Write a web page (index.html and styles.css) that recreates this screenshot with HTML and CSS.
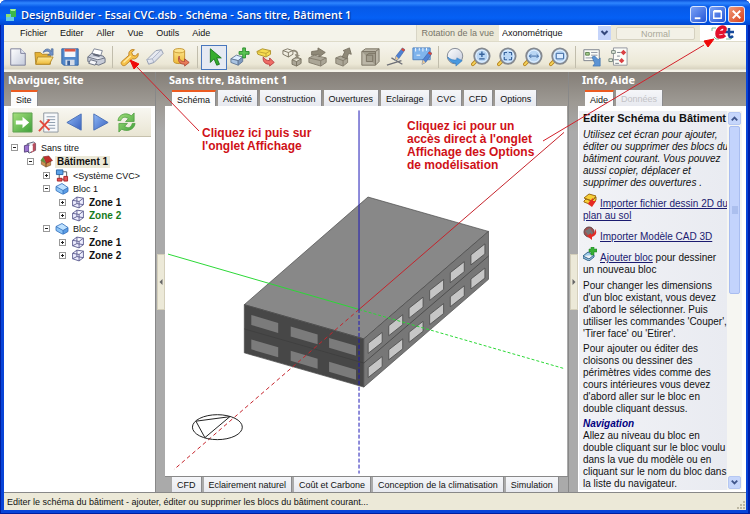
FILE: index.html
```html
<!DOCTYPE html>
<html lang="fr">
<head>
<meta charset="utf-8">
<title>DesignBuilder</title>
<link rel="stylesheet" href="styles.css">
</head>
<body>
<svg class="defs" aria-hidden="true">
  <defs>
    <linearGradient id="steel" x1="0" y1="0" x2="1" y2="1"><stop offset="0" stop-color="#ffffff"/><stop offset="1" stop-color="#c4cadb"/></linearGradient>
    <linearGradient id="gold" x1="0" y1="0" x2="0" y2="1"><stop offset="0" stop-color="#ffeb9a"/><stop offset="1" stop-color="#edb936"/></linearGradient>
    <linearGradient id="sky" x1="0" y1="0" x2="1" y2="1"><stop offset="0" stop-color="#8eb8f5"/><stop offset="1" stop-color="#3a62c0"/></linearGradient>
    <linearGradient id="leaf" x1="0" y1="0" x2="1" y2="1"><stop offset="0" stop-color="#a5e07c"/><stop offset="1" stop-color="#3ea03a"/></linearGradient>
    <symbol id="lens" viewBox="0 0 22 22"><path d="M6 15l-4 4" stroke="#b9851e" stroke-width="4" stroke-linecap="round"/><path d="M6 15l-4 4" stroke="#f4d35a" stroke-width="2" stroke-linecap="round"/><circle cx="12" cy="10" r="8.5" fill="#b9d6f4" stroke="#85898f" stroke-width="2"/><circle cx="12" cy="10" r="6.5" fill="none" stroke="#e9f4ff"/></symbol>
    <symbol id="pencil" viewBox="0 0 12 14"><path d="M9 0l3 2-7 10-4 2 1-5z" fill="#4f82d4" stroke="#385a99" stroke-width=".6"/><path d="M9 0l3 2-1.500 2-3-2z" fill="#d34a3c"/><path d="M2 9l3 3-4 2z" fill="#eccb96"/></symbol>
    <symbol id="block" viewBox="0 0 14 12"><path d="M1 4l6-3 6 4-5 3z" fill="#bfe2ff"/><path d="M1 4l7 4v4L1 8z" fill="#8cc4f6"/><path d="M8 8l5-3v4l-5 3z" fill="#5a9ce4"/><path d="M1 4l6-3 6 4v4l-5 3-7-4zM1 4l7 4 5-3M8 8v4" fill="none" stroke="#2f6cba" stroke-width=".8"/></symbol>
    <symbol id="zone" viewBox="0 0 12 12"><path d="M1 4l4-3 6 1v6l-4 3-6-2zM1 4l6 1 4-3M7 5v6M5 1v6l-4 2M5 7l6 1" fill="#eef" stroke="#55558a" stroke-width=".8"/></symbol>
  </defs>
</svg>

<div class="window">
  <header class="titlebar">
    <svg class="app-icon" viewBox="0 0 12 12"><path d="M5 0h6v8H5z" fill="#3bb84a"/><path d="M5 0h6l-1 2H6z" fill="#a5f09a"/><path d="M1 5h5v3h3v4H1z" fill="#62c8e8"/><path d="M1 5h4v3H1z" fill="#8fe070"/></svg>
    <h1>DesignBuilder - Essai CVC.dsb - Schéma - Sans titre, Bâtiment 1</h1>
    <div class="window-buttons">
      <button aria-label="Réduire"><svg viewBox="0 0 16 16"><path d="M4 11h6v2H4z" fill="#fff"/></svg></button>
      <button aria-label="Agrandir"><svg viewBox="0 0 16 16"><path d="M4 5h8v7H4zM4 4h8" fill="none" stroke="#fff" stroke-width="1.500"/></svg></button>
      <button class="close" aria-label="Fermer"><svg viewBox="0 0 16 16"><path d="M4 4l8 8M12 4l-8 8" stroke="#fff" stroke-width="2"/></svg></button>
    </div>
  </header>

  <div class="menubar">
    <nav class="menu">
      <a href="#">Fichier</a><a href="#">Editer</a><a href="#">Aller</a><a href="#">Vue</a><a href="#">Outils</a><a href="#">Aide</a>
    </nav>
    <div class="view-controls">
      <label for="rotation">Rotation de la vue</label>
      <div class="combo">
        <select id="rotation"><option>Axonométrique</option></select>
        <svg viewBox="0 0 12 14" aria-hidden="true"><path d="M3 5l3 3 3-3" fill="none" stroke="#34487c" stroke-width="2"/></svg>
      </div>
      <button class="normal" disabled>Normal</button>
      <div class="brand"><svg viewBox="0 0 24 16"><path d="M5 3H1v3M3 12l2 2h3M15 14h5l2-2" fill="none" stroke="#7cc49a"/><path d="M18 3v8M14 7h9M18 11c1 2 3 1 4 0" stroke="#174a9c" stroke-width="2.500" fill="none"/><path d="M7 8l6-1c3-5-1-6-4-4-4 3-4 9 0 9 2 0 4-1 5-2" fill="none" stroke="#e2102c" stroke-width="3.500"/></svg></div>
    </div>
  </div>

  <div class="toolbar" role="toolbar">
    <button aria-label="Nouveau"><svg viewBox="0 0 22 22"><path d="M3 2h11l5 5v13H3z" fill="url(#steel)" stroke="#777a96"/><path d="M14 2v5h5" fill="#e4e8f2" stroke="#777a96"/></svg></button>
    <button aria-label="Ouvrir"><svg viewBox="0 0 22 22"><path d="M1 6h6l2 2h9v11H2z" fill="#e5b234" stroke="#ad852a"/><path d="M4 11h17l-4 8H2z" fill="url(#gold)" stroke="#b48b2c"/><path d="M10 6c2-5 7-5 9-1V2h2v7h-6l3-2c-2-3-4-3-8-1z" fill="#6f91c9" stroke="#476594" stroke-width=".7"/></svg></button>
    <button aria-label="Enregistrer"><svg viewBox="0 0 22 22"><path d="M2 2h18v18H4l-2-2z" fill="#5288cb" stroke="#32609f"/><path d="M5 2h12v9H5z" fill="#f4f7fc"/><path d="M5 2h12v3H5z" fill="#dc5542"/><path d="M6 14h10v6H6z" fill="#d5dce8"/><path d="M8 15h3v5H8z" fill="#39619b"/></svg></button>
    <button aria-label="Imprimer"><svg viewBox="0 0 22 22"><path d="M6 8l3-6 9 2-2 6z" fill="#fff" stroke="#777f91"/><path d="M2 11l4-4 13 3 2 3v4l-7 3L2 16z" fill="#c7ccd8" stroke="#646b7c"/><path d="M2 11l11 3 8-2M5 14l7 2-2 4-7-2z" fill="#f6f7fb" stroke="#646b7c"/><path d="M8 8l7 2" stroke="#626878" stroke-width="2"/></svg></button>
    <span class="sep"></span>
    <button aria-label="Options de modélisation"><svg viewBox="0 0 22 22"><path d="M3 16l8-7c-1-4 2-7 6-6l-3 3 1 3 3 1 3-3c1 4-3 7-6 6l-8 7c-3 2-6-2-4-4z" fill="#f6c24a" stroke="#bb7e20"/><path d="M5 17l8-7" stroke="#ffe9a0" stroke-width="1.500"/></svg></button>
    <button aria-label="Effacer"><svg viewBox="0 0 22 22"><path d="M2 14L12 4l6-1 2 4-10 10-6 2z" fill="url(#steel)" stroke="#8d97ac"/><path d="M2 14l6-1L18 3M8 13l2 4" fill="none" stroke="#a7b0c4"/></svg></button>
    <button aria-label="Bibliothèque"><svg viewBox="0 0 22 22"><path d="M3 4c0-3 12-3 12 0v12c0 3-12 3-12 0z" fill="url(#gold)" stroke="#c08d27"/><path d="M3 5c2 2 10 2 12 0" fill="none" stroke="#c99a35"/><path d="M9 10c0 5 3 6 6 6v-3l5 4-5 4v-2c-6 0-8-4-6-9z" fill="#e87b58" stroke="#ae4937"/></svg></button>
    <span class="sep"></span>
    <button class="selected" aria-label="Sélectionner"><svg viewBox="0 0 22 22"><path d="M7 2v15l4-4 3 7 3-1-3-7h5z" fill="#35ad2e" stroke="#19751e"/></svg></button>
    <button aria-label="Ajouter bloc"><svg viewBox="0 0 22 22"><path d="M1 13l6-4 7 2-5 4z" fill="#dcecff" stroke="#617795"/><path d="M1 13l8 2v5l-8-3z" fill="#aac4e2" stroke="#617795"/><path d="M9 15l5-4v5l-5 4z" fill="#7f9bc0" stroke="#617795"/><path d="M14 1h3v4h4v3h-4v4h-3V8h-4V5h4z" fill="#5bc452" stroke="#288b2c"/></svg></button>
    <button aria-label="Etirer"><svg viewBox="0 0 22 22"><path d="M1 5l6-3 9 2v4l-5 3L2 8z" fill="#f6dc4f" stroke="#ac912a"/><path d="M1 5l10 2 5-3M11 7v4" fill="none" stroke="#bfa034"/><path d="M8 11c-1 6 3 8 7 8v2l5-4-5-5v3c-3 0-5-1-7-4z" fill="#ef6c65" stroke="#b73e40"/></svg></button>
    <button aria-label="Copier"><svg viewBox="0 0 22 22"><path d="M1 4l5-2 6 2v4l-5 3-6-3zM1 4l6 2 5-2M7 6v5" fill="none" stroke="#77715f"/><path d="M11 14l5-3 5 2v5l-5 3-5-2zM11 14l5 2 5-3M16 16v5" fill="#aba697" stroke="#77715f"/><path d="M12 3c5 0 6 3 6 6h2l-4 3-2-4h2c0-2-1-3-4-3z" fill="#918b7a"/></svg></button>
    <button aria-label="Déplacer"><svg viewBox="0 0 22 22"><path d="M1 12l6-3 13 3v5l-6 4-13-4z" fill="#aba697" stroke="#817b6b"/><path d="M1 12l13 3 6-3M14 15v6" fill="none" stroke="#817b6b"/><path d="M4 5l7-1V1l8 5-7 5V8L4 9z" fill="#8f8978" stroke="#777161"/></svg></button>
    <button aria-label="Tirer face"><svg viewBox="0 0 22 22"><path d="M2 12l5-2 8 2v5l-5 4-8-3z" fill="#aba697" stroke="#817b6b"/><path d="M2 12l8 3 5-3M10 15v6" fill="none" stroke="#817b6b"/><path d="M9 11l3-6-2-1 7-3 2 7-3-1-2 6z" fill="#8f8978" stroke="#777161"/></svg></button>
    <button aria-label="Couper"><svg viewBox="0 0 22 22"><path d="M2 5l4-3h15v14l-4 4H2z" fill="#bcb7a8" stroke="#777161"/><path d="M2 5h15v15M17 5l4-3M7 9h7v7H7zM7 9l3-2h7" fill="#a29d8d" stroke="#777161"/></svg></button>
    <button aria-label="Dessiner"><svg viewBox="0 0 22 22"><path d="M1 20l16-5M6 12l12 7" stroke="#6e7077" stroke-width="1.500"/><use href="#pencil" x="9" y="0" width="12" height="16"/></svg></button>
    <button aria-label="Mesurer"><svg viewBox="0 0 22 22"><path d="M1 1h19v13H1z" fill="#7fb4ec" stroke="#4d7fbd"/><path d="M4 1v4M8 1v3M12 1v4M16 1v3M5 9h4" stroke="#fff"/><use href="#pencil" x="10" y="4" width="12" height="16"/></svg></button>
    <span class="sep"></span>
    <button aria-label="Orbite"><svg viewBox="0 0 22 22"><circle cx="11" cy="10" r="8.500" fill="url(#steel)" stroke="#7d838f"/><path d="M3 11c3 3 7 4 10 3v-2l6 3-7 6v-3c-4 0-8-3-9-7z" fill="#4a99df" stroke="#2972b8" stroke-width=".6"/></svg></button>
    <button aria-label="Zoom"><svg viewBox="0 0 22 22"><use href="#lens"/><path d="M9 8h6M12 5v6M9 13h6" stroke="#36629c" stroke-width="1.500"/></svg></button>
    <button aria-label="Ajuster"><svg viewBox="0 0 22 22"><use href="#lens"/><path d="M8 9V6h3M16 9V6h-3M8 11v3h3M16 11v3h-3" fill="none" stroke="#36629c" stroke-width="1.200"/></svg></button>
    <button aria-label="Panoramique"><svg viewBox="0 0 22 22"><use href="#lens"/><path d="M7 10h10M9 8l-2 2 2 2M15 8l2 2-2 2" fill="none" stroke="#36629c"/></svg></button>
    <button aria-label="Zoom fenêtre"><svg viewBox="0 0 22 22"><use href="#lens"/><path d="M8 7h8v6H8z" fill="#dcecff" stroke="#36629c"/></svg></button>
    <span class="sep"></span>
    <button aria-label="Charger données"><svg viewBox="0 0 22 22"><path d="M2 3h17v12H2z" fill="#fbfcf7" stroke="#777d88"/><path d="M4 6h4v3H4z" fill="#a5cf8d" stroke="#587d4b"/><path d="M10 6h7M10 9h7M4 12h10" stroke="#8a90a0"/><path d="M11 11l3-1 4 4 2-2v9h-8l2-3z" fill="#5b93d4" stroke="#396da9" stroke-width=".7"/></svg></button>
    <button aria-label="Liste de données"><svg viewBox="0 0 22 22"><path d="M6 1h15v19H6z" fill="#fbfcf7" stroke="#8d919b"/><path d="M4 4h4v3H4zM1 13h4v3H1z" fill="#eaf3e4" stroke="#6e7f75"/><path d="M10 6h4M7 14h5M10 10h3M8 18h4" stroke="#707984"/><path d="M17 3l3 3-3 3-3-3zM15 12l3 3-3 3-3-3z" fill="#da4144"/></svg></button>
  </div>

  <main class="workspace">
    <section class="panel navigator">
      <h2>Naviguer, Site</h2>
      <div class="tabs"><button class="tab active">Site</button></div>
      <div class="sheet">
        <div class="nav-tools">
          <button aria-label="Aller"><svg viewBox="0 0 22 22"><path d="M1 1h20v20H1z" fill="url(#leaf)" stroke="#62a354"/><path d="M4 9h7V5l7 6-7 6v-4H4z" fill="#fff"/></svg></button>
          <button aria-label="Supprimer"><svg viewBox="0 0 22 22"><path d="M6 1h15v20H6z" fill="#f7f9fb" stroke="#8e96a0"/><path d="M9 5h9M9 8h9M9 11h9M11 14h7M11 17h7" stroke="#8c9bac"/><path d="M2 9l10 10M12 8L1 20" stroke="#e2493c" stroke-width="2"/></svg></button>
          <button aria-label="Précédent"><svg viewBox="0 0 22 22"><path d="M18 2v17L3 11z" fill="url(#sky)" stroke="#4b70b7"/></svg></button>
          <button aria-label="Suivant"><svg viewBox="0 0 22 22"><path d="M4 2v17l15-8z" fill="url(#sky)" stroke="#4b70b7"/></svg></button>
          <button aria-label="Actualiser"><svg viewBox="0 0 22 22"><path d="M2 9c1-7 9-9 14-5l3-3v9h-9l3-3c-4-3-7-1-8 2zM20 12c-1 7-9 9-14 6l-3 3v-9h9l-3 3c4 3 7 1 8-3z" fill="url(#leaf)" stroke="#4d9d3f" stroke-width=".8"/></svg></button>
        </div>
        <ul class="tree">
          <li><div class="node"><i class="box minus"></i><svg viewBox="0 0 14 14"><path d="M4 3l7-2 2 2v7l-7 3-2-2z" fill="#edf1f7" stroke="#555b70"/><path d="M1 5l5-1v7l-5 1z" fill="#9b73cf" stroke="#59437e"/><path d="M10 3l3-1v8l-5 3z" fill="#b94d5c"/><path d="M6 5h4v6H6z" fill="#fff"/></svg><span>Sans titre</span></div>
            <ul>
              <li><div class="node current"><i class="box minus"></i><svg viewBox="0 0 14 14"><path d="M2 6l5 3v4l-5-3zM7 9l5-3v5l-5 2z" fill="#c99052" stroke="#704922" stroke-width=".6"/><path d="M4 2l6-1 4 5-7 3z" fill="#c22f2c" stroke="#74201c" stroke-width=".6"/><path d="M4 2L1 6l6 3z" fill="#61923d"/></svg><span>Bâtiment 1</span></div>
                <ul>
                  <li><div class="node"><i class="box"></i><svg viewBox="0 0 14 14"><path d="M4 5v6h6M7 3h5v6" fill="none" stroke="#555"/><path d="M1 1h7v5H1z" fill="#5ca2e8" stroke="#2863a5"/><path d="M2 10h5v3H2zM9 8h4v5H9z" fill="#e65355" stroke="#a52327"/></svg><span>&lt;Système CVC&gt;</span></div></li>
                  <li><div class="node"><i class="box minus"></i><svg viewBox="0 0 14 12"><use href="#block"/></svg><span>Bloc 1</span></div>
                    <ul>
                      <li><div class="node strong"><i class="box"></i><svg viewBox="0 0 12 12"><use href="#zone"/></svg><span>Zone 1</span></div></li>
                      <li><div class="node strong green"><i class="box"></i><svg viewBox="0 0 12 12"><use href="#zone"/></svg><span>Zone 2</span></div></li>
                    </ul></li>
                  <li><div class="node"><i class="box minus"></i><svg viewBox="0 0 14 12"><use href="#block"/></svg><span>Bloc 2</span></div>
                    <ul>
                      <li><div class="node strong"><i class="box"></i><svg viewBox="0 0 12 12"><use href="#zone"/></svg><span>Zone 1</span></div></li>
                      <li><div class="node strong"><i class="box"></i><svg viewBox="0 0 12 12"><use href="#zone"/></svg><span>Zone 2</span></div></li>
                    </ul></li>
                </ul></li>
            </ul></li>
        </ul>
      </div>
    </section>

    <div class="splitter"><button aria-label="Replier le navigateur"><svg viewBox="0 0 8 56"><path d="M6 24v8l-4-4z" fill="#666"/></svg></button></div>

    <section class="panel model">
      <h2>Sans titre, Bâtiment 1</h2>
      <div class="tabs">
        <button class="tab active">Schéma</button><button class="tab">Activité</button><button class="tab">Construction</button><button class="tab">Ouvertures</button><button class="tab">Eclairage</button><button class="tab">CVC</button><button class="tab">CFD</button><button class="tab">Options</button>
      </div>
      <div class="sheet viewport">
        <svg viewBox="165 106 403 370" role="img" aria-label="Bâtiment 1">
          <defs>
            <path id="pane-front" d="M0 0l27 8v10L0 10z"/>
            <path id="pane-side" d="M0 0l14-11v10L0 10z"/>
          </defs>
          <g stroke="#4a4a4a" stroke-width=".7" stroke-linejoin="round">
            <path d="M244.500 304.700L368.500 196.800 489.300 231.300 364.300 339z" fill="#888"/>
            <path d="M244.500 304.700L364.300 339v48.300L244.500 353z" fill="#474747"/>
            <path d="M364.300 339L489.300 231.300v48L364.300 387.300z" fill="#777"/>
            <path d="M244.500 329l119.800 34.200L489.300 256" fill="none" stroke="#3c3c3c"/>
          </g>
          <g fill="#7b7b7b">
            <use href="#pane-front" x="251.500" y="315"/><use href="#pane-front" x="291" y="326.500"/><use href="#pane-front" x="329.500" y="338"/>
            <use href="#pane-front" x="251.500" y="339.500"/><use href="#pane-front" x="291" y="351"/><use href="#pane-front" x="329.500" y="362"/>
          </g>
          <g fill="#c6c6c6" stroke="#494949" stroke-width=".8">
            <use href="#pane-side" x="368.700" y="343.500"/><use href="#pane-side" x="389.300" y="325.800"/><use href="#pane-side" x="409.700" y="308.200"/><use href="#pane-side" x="430.300" y="290.400"/><use href="#pane-side" x="451" y="272.600"/><use href="#pane-side" x="471.700" y="254.800"/>
            <use href="#pane-side" x="368.700" y="367.700"/><use href="#pane-side" x="389.300" y="350"/><use href="#pane-side" x="409.700" y="332.400"/><use href="#pane-side" x="430.300" y="314.600"/><use href="#pane-side" x="451" y="296.800"/><use href="#pane-side" x="471.700" y="279"/>
          </g>
          <g fill="none">
            <path d="M168 254L359.500 309.500" stroke="#2bd836"/>
            <path d="M359.500 309.500L566 369" stroke="#2bd836" stroke-dasharray="3 2"/>
            <path d="M359.500 309.500L565 132" stroke="#c5232b"/>
            <path d="M359.500 309.500L174 470" stroke="#c5232b" stroke-dasharray="4 3"/>
            <path d="M359.500 110v199" stroke="#1d19b5"/>
            <path d="M359.500 309v165" stroke="#1d19b5" stroke-dasharray="4 2"/>
            <ellipse cx="217.500" cy="427.500" rx="25" ry="12.500" stroke="#222"/>
            <path d="M196 421.500L230 417 205 438z" stroke="#222"/>
          </g>
        </svg>
      </div>
      <div class="tabs bottom">
        <button class="tab">CFD</button><button class="tab">Eclairement naturel</button><button class="tab">Coût et Carbone</button><button class="tab">Conception de la climatisation</button><button class="tab">Simulation</button>
      </div>
    </section>

    <div class="splitter"><button aria-label="Replier l'aide"><svg viewBox="0 0 8 56"><path d="M2 24v8l4-4z" fill="#666"/></svg></button></div>

    <section class="panel info">
      <h2>Info, Aide</h2>
      <div class="tabs"><button class="tab active">Aide</button><button class="tab" disabled>Données</button></div>
      <div class="sheet help">
        <article>
          <h3>Editer Schéma du Bâtiment</h3>
          <p><em>Utilisez cet écran pour ajouter,<br>éditer ou supprimer des blocs du<br>bâtiment courant. Vous pouvez<br>aussi copier, déplacer et<br>supprimer des ouvertures .</em></p>
          <p class="with-icon"><svg viewBox="0 0 14 14"><path d="M1 5l5-4 7 2-4 5zM1 8l2-2 6 2 4-4v3L9 12 1 9z" fill="#f7cf38" stroke="#9d6d12"/><path d="M6 9l4-4v3h3l-4 6-4-3z" fill="#e52b24"/></svg><a href="#">Importer fichier dessin 2D du<br>plan au sol</a></p>
          <p class="with-icon"><svg viewBox="0 0 14 14"><circle cx="6" cy="6" r="5" fill="#a64f4e" stroke="#62484a"/><path d="M2 5l5-3 3 5-4 3z" fill="#777"/><path d="M12 3c3 4 0 7-3 8v3L4 10l4-3v2c3-1 4-3 4-6z" fill="#e52b24"/></svg><a href="#">Importer Modèle CAD 3D</a></p>
          <p class="with-icon"><svg viewBox="0 0 14 14"><path d="M0 9l5-4 6 3-5 4zM0 9v2l6 3 5-4V8" fill="#9fcbea" stroke="#35658a"/><path d="M8 0h3v2h3v3h-3v3H8V5H6V2h2z" fill="#37b034" stroke="#187c20" stroke-width=".5"/></svg><a href="#">Ajouter bloc</a> pour dessiner<br>un nouveau bloc</p>
          <p>Pour changer les dimensions<br>d'un bloc existant, vous devez<br>d'abord le sélectionner. Puis<br>utiliser les commandes 'Couper',<br>'Tirer face' ou 'Etirer'.</p>
          <p>Pour ajouter ou éditer des<br>cloisons ou dessiner des<br>périmètres vides comme des<br>cours intérieures vous devez<br>d'abord aller sur le bloc en<br>double cliquant dessus.</p>
          <h4>Navigation</h4>
          <p>Allez au niveau du bloc en<br>double cliquant sur le bloc voulu<br>dans la vue du modèle ou en<br>cliquant sur le nom du bloc dans<br>la liste du navigateur.</p>
        </article>
        <div class="scrollbar">
          <button aria-label="Défiler vers le haut"><svg viewBox="0 0 12 12"><path d="M3 8l3-3 3 3" fill="none" stroke="#40568c" stroke-width="2"/></svg></button>
          <div class="track"><div class="thumb"><svg viewBox="0 0 6 8"><path d="M0 1h6M0 3h6M0 5h6M0 7h6" stroke="#94abe0"/></svg></div></div>
          <button aria-label="Défiler vers le bas"><svg viewBox="0 0 12 12"><path d="M3 4l3 3 3-3" fill="none" stroke="#40568c" stroke-width="2"/></svg></button>
        </div>
      </div>
    </section>
  </main>

  <footer class="statusbar">
    <span>Editer le schéma du bâtiment - ajouter, éditer ou supprimer les blocs du bâtiment courant...</span>
    <svg viewBox="0 0 10 10"><path d="M7 1h2v2H7zM4 4h2v2H4zM7 4h2v2H7zM1 7h2v2H1zM4 7h2v2H4zM7 7h2v2H7z" fill="#bdb8a2"/></svg>
  </footer>

  <svg class="callouts" viewBox="0 0 750 514" aria-hidden="true">
    <g stroke="#d3202a" stroke-width="1"><path d="M199 131l-64-66M543 141L704 45"/></g>
    <path d="M130 60l9 4-5 5zM714 39l-6 8-4-6z" fill="#f00808" stroke="#f00808"/>
  </svg>
  <p class="note note-options">Cliquez ici puis sur<br>l'onglet Affichage</p>
  <p class="note note-direct">Cliquez ici pour un<br>accès direct à l'onglet<br>Affichage des Options<br>de modélisation</p>
</div>
</body>
</html>
```
FILE: styles.css
```css
* { box-sizing: border-box; }
body { margin: 0; font: 10px/12px "Liberation Sans", Arial, sans-serif; color: #111; background: #fff; }
h1, h2, h3, h4, p, ul { margin: 0; padding: 0; font-size: inherit; }
button, select { font: inherit; color: inherit; margin: 0; padding: 0; border: 0; background: none; }
svg { display: block; }
.defs { position: absolute; width: 0; height: 0; }

.window {
  position: relative;
  display: flex;
  flex-direction: column;
  min-height: 100vh;
  padding: 0 4px 4px;
  background: #0844d8;
  border-radius: 6px 6px 0 0;
  box-shadow: inset 1px -1px 0 #001ea0, inset -2px 0 0 #0020a8;
}

.titlebar {
  display: flex;
  align-items: center;
  gap: 4px;
  height: 25px;
  margin: 0 -4px;
  padding: 4px 5px 0;
  border-radius: 6px 6px 0 0;
  background: linear-gradient(#0a4fd8, #2f86ff 3px, #0659e8 7px, #0560f5 18px, #0046d0);
}
.app-icon { width: 12px; height: 12px; }
.titlebar h1 { flex: 1; color: #fff; font: 600 11px/16px "Open Sans", sans-serif; text-shadow: 1px 1px 1px #0a2a80; white-space: nowrap; }
.window-buttons { display: flex; gap: 2px; }
.window-buttons button { width: 17px; height: 17px; border: 1px solid #dce8ff; border-radius: 3px; background: linear-gradient(135deg, #7ba2f5, #2456d8); }
.window-buttons .close { background: linear-gradient(135deg, #f09a78, #d8401c); }

.menubar { display: flex; height: 17px; background: #f4f3ea; border-bottom: 1px solid #dedbc9; font-size: 9px; }
.menu { display: flex; flex: 1; align-items: center; gap: 13px; padding-left: 16px; }
.menu a { color: inherit; text-decoration: none; }
.view-controls { display: flex; align-items: center; gap: 5px; padding-left: 4px; border-left: 1px solid #d8d5c6; background: #ece9d8; color: #77756a; }
.combo { display: flex; align-items: center; width: 112px; height: 16px; background: #fff; color: #111; }
.combo select { flex: 1; height: 16px; padding-left: 3px; appearance: none; }
.combo svg { width: 13px; height: 14px; background: #c5d4fa; }
.normal { width: 79px; height: 13px; border: 1px solid #d5d1c0; border-radius: 2px; background: #f3f1e7; color: #aaa899; }
.brand { display: flex; justify-content: center; width: 46px; height: 16px; background: #fff; }
.brand svg { width: 24px; height: 16px; }

.toolbar { display: flex; align-items: center; height: 30px; padding-left: 1px; background: linear-gradient(#f6f5ee, #ece8d6 22px, #d8d3c0 27px, #f4f2e8 28px); }
.toolbar button { display: grid; place-items: center; width: 26px; height: 25px; }
.toolbar button svg { width: 20px; height: 20px; }
.toolbar .selected { border: 1px solid #4877bd; background: #e6eaf2; }
.sep { width: 1px; height: 22px; margin: 0 3px; background: #c1bdac; }

.workspace { display: grid; grid-template-columns: 151px 10px minmax(0, 1fr) 10px 168px; flex: 1; background: linear-gradient(#847e77, #9d9993 30px, #aaa 60px); }
.panel { display: flex; flex-direction: column; min-width: 0; }
.panel h2 { height: 18px; padding-left: 4px; color: #fff; font: bold 11px/16px "Noto Sans", sans-serif; white-space: nowrap; }
.tabs { display: flex; gap: 2px; height: 16px; padding-left: 7px; font-size: 9px; }
.tab { padding: 1px 5px 0; border: 1px solid #8a8a8c; border-width: 0 1px 0 0; background: linear-gradient(#f5f6f9, #e7e9ef); white-space: nowrap; }
.tab.active { border-top: 2px solid #ec5b20; background: #fcfcfc; }
.tab:disabled { color: #c2c2c6; }
.tabs.bottom .tab { height: 15px; }
.tabs.bottom { border-top: 1px solid #888; }
.sheet { flex: 1; background: #fff; }

.nav-tools { display: flex; gap: 5px; margin: 2px 4px 0; padding: 4px; height: 29px; border-bottom: 1px solid #c6c1ad; background: linear-gradient(#f8f7f1, #e9e5d3); }
.nav-tools svg { width: 21px; height: 21px; }
.tree { padding: 4px 0 0 7px; font-size: 9px; list-style: none; }
.tree ul { padding: 1px 0 0 16px; list-style: none; }
.node { display: flex; align-items: center; height: 13px; white-space: nowrap; }
.node svg { width: 14px; height: 13px; margin-left: 5px; }
.node span { padding: 0 2px; margin-left: 2px; }
.current, .strong { font-size: 10px; font-weight: bold; }
.current span { background: #ece9d8; }
.green { color: #177a1b; }
.box { width: 7px; height: 7px; border: 1px solid #999; background: linear-gradient(#222, #222) center / 3px 1px no-repeat, linear-gradient(#222, #222) center / 1px 3px no-repeat, #fff; }
.box.minus { background: linear-gradient(#222, #222) center / 3px 1px no-repeat, #fff; }

.splitter { display: flex; flex-direction: column; align-items: center; padding-top: 182px; border-left: 1px solid #888; }
.splitter button { width: 8px; height: 56px; border: 1px solid #d4cfbb; background: #ece9d8; }

.viewport { min-height: 0; margin-right: 1px; }
.viewport svg { width: 100%; height: 100%; }

.help { display: flex; padding: 5px 4px 2px 1px; }
.help article { flex: 1; min-width: 0; overflow: hidden; padding-left: 4px; background: linear-gradient(90deg, #f1f2f6, #e9ebf1); white-space: nowrap; }
.help h3 { font-size: 11px; line-height: 14px; margin-bottom: 4px; }
.help p { margin-bottom: 3px; }
.help .with-icon { margin: 9px 0 0; }
.with-icon + p:not(.with-icon) { margin-top: 4px; }
.help p:last-child { margin-bottom: 0; }
.with-icon svg { float: left; width: 14px; height: 14px; margin: -5px 3px -4px 0; }
.help a { color: #1b1b70; }
.help h4 { color: #000080; font-style: italic; }
.scrollbar { display: flex; flex-direction: column; width: 15px; background: #f6f6f2; }
.scrollbar button { width: 13px; height: 13px; margin: 1px; border: 1px solid #b5c7f2; border-radius: 2px; background: #c6d6fb; }
.track { flex: 1; }
.thumb { display: grid; place-items: center; height: 48%; margin: 0 2px; border: 1px solid #a9bdf0; border-radius: 2px; background: #c3d3fc; }
.thumb svg { width: 6px; height: 8px; }

.statusbar { display: flex; align-items: center; height: 18px; padding-left: 3px; border-top: 1px solid #888; background: #ece9d8; }
.statusbar span { flex: 1; font-size: 9px; }
.statusbar svg { width: 10px; height: 10px; align-self: flex-end; }

.callouts { position: absolute; inset: 0; width: 100%; height: 100%; pointer-events: none; }
.note { position: absolute; color: #cf1117; font-size: 12px; font-weight: bold; line-height: 13px; }
.note-options { left: 202px; top: 127px; }
.note-direct { left: 407px; top: 120px; }
```
